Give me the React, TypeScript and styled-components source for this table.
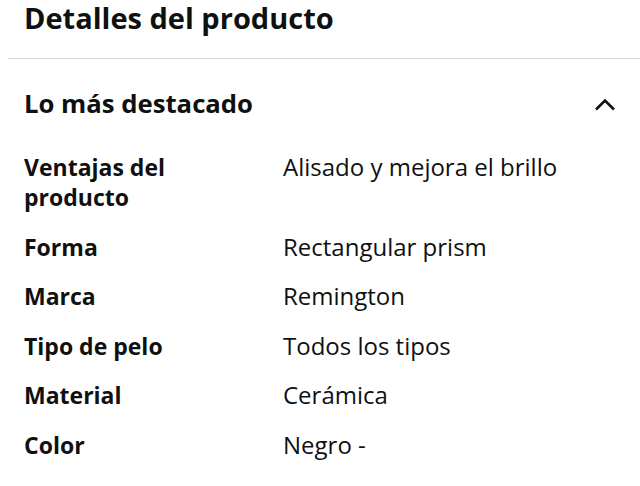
import React from "react";
import styled, { createGlobalStyle } from "styled-components";

const Global = createGlobalStyle`
  html, body { margin: 0; padding: 0; background: #ffffff; }
  body { font-family: "Open Sans", "Liberation Sans", sans-serif; color: #0f1111; }
`;

const Page = styled.div`
  width: 640px;
  height: 486px;
  overflow: hidden;
  background: #ffffff;
`;

const Title = styled.h1`
  margin: 0;
  padding: 0 0 0 24px;
  font-size: 29px;
  line-height: 36px;
  font-weight: 700;
  color: #0f1111;
`;

const Divider = styled.hr`
  margin: 22px 0 0 8px;
  border: 0;
  height: 1px;
  background: #d5d9d9;
`;

const SectionHead = styled.div`
  display: flex;
  align-items: center;
  justify-content: space-between;
  padding: 27px 24px 0 24px;
`;

const SectionTitle = styled.h2`
  margin: 0;
  font-size: 25.7px;
  line-height: 36px;
  font-weight: 700;
`;

const Chevron = styled.svg`
  width: 22px;
  height: 13px;
  margin-right: 0;
`;

const Table = styled.div`
  display: grid;
  grid-template-columns: 259px 1fr;
  row-gap: 19.5px;
  padding: 30px 24px 0 24px;
`;

const Label = styled.div`
  font-size: 23px;
  line-height: 30px;
  font-weight: 700;
  padding-right: 80px;
`;

const Value = styled.div`
  font-size: 24px;
  line-height: 30px;
  font-weight: 400;
`;

const rows: [string, string][] = [
  ["Ventajas del producto", "Alisado y mejora el brillo"],
  ["Forma", "Rectangular prism"],
  ["Marca", "Remington"],
  ["Tipo de pelo", "Todos los tipos"],
  ["Material", "Cerámica"],
  ["Color", "Negro -"],
];

export default function App() {
  return (
    <Page>
      <Global />
      <Title>Detalles del producto</Title>
      <Divider />
      <SectionHead>
        <SectionTitle>Lo más destacado</SectionTitle>
        <Chevron viewBox="0 0 22 13">
          <path d="M2 11.5 L11 2.5 L20 11.5" fill="none" stroke="#0f1111" strokeWidth="2.6" />
        </Chevron>
      </SectionHead>
      <Table>
        {rows.map(([k, v]) => (
          <React.Fragment key={k}>
            <Label>{k}</Label>
            <Value>{v}</Value>
          </React.Fragment>
        ))}
      </Table>
    </Page>
  );
}
